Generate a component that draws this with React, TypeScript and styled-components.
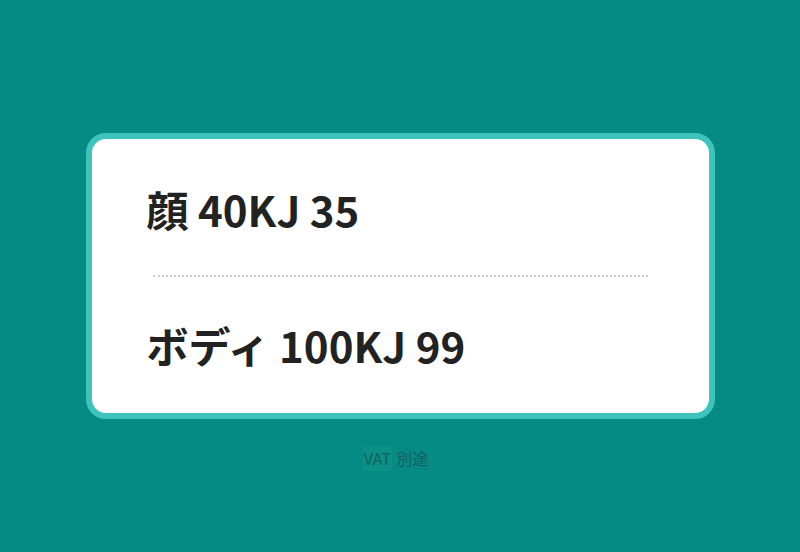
import React from "react";
import styled, { createGlobalStyle } from "styled-components";

const Global = createGlobalStyle`
  html, body { margin: 0; padding: 0; }
  body {
    background: #058a84;
    font-family: "Noto Sans CJK JP", "Noto Sans", sans-serif;
  }
`;

const Page = styled.div`
  width: 800px;
  height: 552px;
  display: flex;
  flex-direction: column;
  align-items: center;
  padding-top: 133px;
  box-sizing: border-box;
`;

const Card = styled.div`
  width: 629px;
  box-sizing: border-box;
  background: #ffffff;
  border: 6px solid #3fc4bd;
  border-radius: 20px;
  padding: 37px 56px 35px 55px;
`;

const Row = styled.div`
  font-size: 42px;
  font-weight: 700;
  line-height: 66px;
  color: #222222;
  white-space: nowrap;
`;

const Divider = styled.hr`
  border: none;
  border-top: 2px dotted #cccccc;
  margin: 33px 5px 35px 6px;
  height: 0;
`;

const Footer = styled.div`
  margin-top: 27px;
  font-size: 16px;
  line-height: 25px;
  color: #16605b;
  display: flex;
  align-items: center;
  gap: 4px;
  margin-right: 9px;
`;

const Mark = styled.span`
  background: #0b9085;
  padding: 0 1px;
`;

export default function App() {
  return (
    <>
      <Global />
      <Page>
        <Card>
          <Row>顔 40KJ 35</Row>
          <Divider />
          <Row>ボディ 100KJ 99</Row>
        </Card>
        <Footer>
          <Mark>VAT</Mark>
          <span>別途</span>
        </Footer>
      </Page>
    </>
  );
}
